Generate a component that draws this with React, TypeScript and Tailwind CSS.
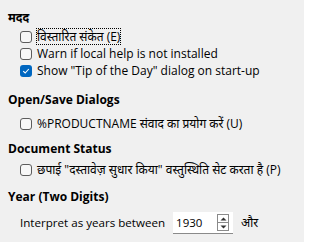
import React from 'react';

const Box = ({ checked = false, focus = false, label }: { checked?: boolean; focus?: boolean; label: string }) => (
  <label className="flex items-center h-[17px] pl-[20px]">
    {checked ? (
      <span className="w-[12px] h-[12px] rounded-[3px] bg-[#0067c0] flex items-center justify-center shrink-0">
        <svg width="8" height="8" viewBox="0 0 8 8">
          <path d="M1.2 4.2 L3.2 6 L6.8 2" fill="none" stroke="white" strokeWidth="1.1" />
        </svg>
      </span>
    ) : (
      <span className="w-[12px] h-[12px] rounded-[3px] border border-[#5c5c5c] bg-[#f7f7f7] shrink-0" />
    )}
    <span className={`ml-[5px] leading-[15px] ${focus ? 'outline outline-1 outline-dotted outline-black' : ''}`}>{label}</span>
  </label>
);

export default function App() {
  return (
    <div
      className="w-[304px] h-[242px] bg-[#f0f0f0] text-[12px] text-black overflow-hidden pt-[9px]"
      style={{ fontFamily: '"Open Sans", "Noto Sans", sans-serif' }}
    >
      <div className="pl-[8px] font-bold h-[17px] leading-[17px]">मदद</div>
      <div className="mt-[2px]">
        <Box focus label="विस्तारित संकेत (E)" />
        <Box label="Warn if local help is not installed" />
        <Box checked label={'Show "Tip of the Day" dialog on start-up'} />
      </div>
      <div className="pl-[8px] font-bold h-[17px] leading-[17px] mt-[12px]">Open/Save Dialogs</div>
      <div className="mt-[7px]">
        <Box label="%PRODUCTNAME संवाद का प्रयोग करें (U)" />
      </div>
      <div className="pl-[8px] font-bold h-[17px] leading-[17px] mt-[8px]">Document Status</div>
      <div className="mt-[4px]">
        <Box label={'छपाई "दस्तावेज़ सुधार किया" वस्तुस्थिति सेट करता है (P)'} />
      </div>
      <div className="pl-[8px] font-bold h-[17px] leading-[17px] mt-[10px]">Year (Two Digits)</div>
      <div className="flex items-center pl-[20px] mt-[6px] h-[24px]">
        <span className="text-[11.6px]">Interpret as years between</span>
        <div className="ml-[8px] w-[60px] h-[22px] bg-white border-b border-[#8a8a8a] flex items-center">
          <span className="pl-[3px] flex-1 text-[11.5px]">1930</span>
          <div className="w-[12px] h-[17px] mr-[4px] border border-[#8a8a8a] flex flex-col">
            <div className="flex-1 flex items-center justify-center border-b border-[#8a8a8a]">
              <svg width="7" height="4" viewBox="0 0 7 4"><path d="M0.5 3.5 L3.5 0.5 L6.5 3.5Z" fill="#333" /></svg>
            </div>
            <div className="flex-1 flex items-center justify-center">
              <svg width="7" height="4" viewBox="0 0 7 4"><path d="M0.5 0.5 L3.5 3.5 L6.5 0.5Z" fill="#333" /></svg>
            </div>
          </div>
        </div>
        <span className="ml-[8px]">और</span>
      </div>
    </div>
  );
}
